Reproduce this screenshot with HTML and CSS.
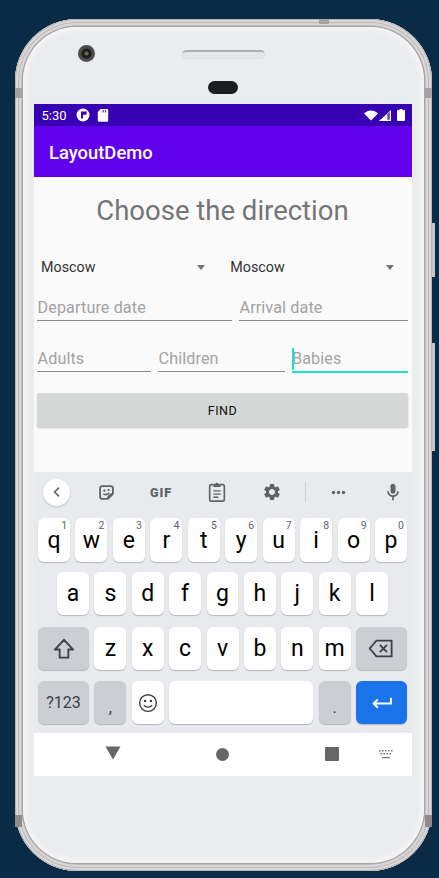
FILE: index.html
```html
<!DOCTYPE html>
<html lang="en">
<head>
    <meta charset="UTF-8">
    <meta name="viewport" content="width=device-width, initial-scale=1.0">
    <title>LayoutDemo</title>
    <link rel="stylesheet" href="styles.css">
</head>
<body>
    <div class="side-btn side-btn-power"></div>
    <div class="side-btn side-btn-volume"></div>
    <div class="phone">
        <span class="band band-top"></span>
        <span class="band band-tl"></span>
        <span class="band band-tr"></span>
        <span class="band band-bl"></span>
        <span class="band band-br"></span>
        <div class="bezel">
            <span class="camera"></span>
            <span class="speaker"></span>
            <span class="sensor"></span>
            <div class="screen">
                <div class="status-bar">
                    <span class="time">5:30</span>
                    <svg class="st-icon st-first" viewBox="0 0 14 14"><circle cx="7" cy="7" r="6.5" fill="#fff"/><path d="M7 3.4h3.6v3.4H7v3.8H5V3.4z" fill="#3700b3"/></svg>
                    <svg class="st-icon" viewBox="0 0 12 14"><path d="M3.5 1H10a1.2 1.2 0 0 1 1.2 1.2v10.4a1.2 1.2 0 0 1-1.2 1.2H2a1.2 1.2 0 0 1-1.2-1.2V4z" fill="#fff"/><path d="M5.6 2h1v2.6h-1zM7.9 2h1v2.6h-1z" fill="#3700b3"/></svg>
                    <span class="status-spacer"></span>
                    <svg class="st-wifi" viewBox="0 0 14 11"><path d="M0 3.4C2 1.4 4.4.4 7 .4s5 1 7 3L7 10.6z" fill="#fff"/></svg>
                    <svg class="st-signal" viewBox="0 0 12 11"><path d="M12 0v11H0z" fill="#fff"/><path d="M8.300 4v5.800h2.500V1.800z" fill="#3700b3" opacity=".75"/></svg>
                    <svg class="st-batt" viewBox="0 0 8 12"><path d="M2.500 0h3v1H7a1 1 0 0 1 1 1v9a1 1 0 0 1-1 1H1a1 1 0 0 1-1-1V2a1 1 0 0 1 1-1h1.500z" fill="#fff"/></svg>
                </div>
                <div class="app-bar">LayoutDemo</div>
                <div class="content">
                    <h1 class="title">Choose the direction</h1>
                    <div class="spinners">
                        <div class="spinner"><span>Moscow</span><i class="arrow"></i></div>
                        <div class="spinner"><span>Moscow</span><i class="arrow"></i></div>
                    </div>
                    <div class="fields fields-dates">
                        <input class="field" placeholder="Departure date">
                        <input class="field" placeholder="Arrival date">
                    </div>
                    <div class="fields fields-people">
                        <input class="field" placeholder="Adults">
                        <input class="field" placeholder="Children">
                        <div class="focus-wrap">
                            <input class="field field-focus" placeholder="Babies">
                            <span class="caret"></span>
                        </div>
                    </div>
                    <button class="find-btn">FIND</button>
                </div>
                <div class="keyboard">
                    <div class="kb-tools">
                        <span class="tool-back"><svg viewBox="0 0 24 24" width="16" height="16"><path d="M15 5.500 8.500 12l6.500 6.500" fill="none" stroke="#5f6368" stroke-width="2.400"/></svg></span>
                        <svg class="tool tool-sticker" viewBox="0 0 24 24"><path d="M6 3h12a3 3 0 0 1 3 3v8l-7 7H6a3 3 0 0 1-3-3V6a3 3 0 0 1 3-3z" fill="none" stroke="#5f6368" stroke-width="2.600"/><path d="M14 21c0-4 3-7 7-7" fill="none" stroke="#5f6368" stroke-width="2.400"/><circle cx="9" cy="9.500" r="1.600" fill="#5f6368"/><circle cx="15" cy="8.500" r="1.600" fill="#5f6368"/><path d="M7.500 14c2.500 1.600 5 1.300 8-1.200" fill="none" stroke="#5f6368" stroke-width="2.200"/></svg>
                        <span class="tool-gif">GIF</span>
                        <svg class="tool tool-clip" viewBox="0 0 24 24"><path d="M8 4H5.500A1.500 1.500 0 0 0 4 5.500v15A1.500 1.500 0 0 0 5.500 22h13a1.500 1.500 0 0 0 1.500-1.500v-15A1.500 1.500 0 0 0 18.500 4H16" fill="none" stroke="#5f6368" stroke-width="1.800"/><path d="M8 3h2.500a1.600 1.600 0 0 1 3 0H16v3.500H8zM8 10h8v1.500H8zM8 13.500h8V15H8zM8 17h5.500v1.500H8z" fill="#5f6368"/></svg>
                        <svg class="tool tool-gear" viewBox="0 0 24 24"><path fill="#5f6368" d="M19.14 12.94c.04-.3.06-.61.06-.94 0-.32-.02-.64-.07-.94l2.03-1.58c.18-.14.23-.41.12-.61l-1.92-3.32c-.12-.22-.37-.29-.59-.22l-2.39.96c-.5-.38-1.03-.7-1.62-.94l-.36-2.54c-.04-.24-.24-.41-.48-.41h-3.84c-.24 0-.43.17-.47.41l-.36 2.54c-.59.24-1.13.57-1.62.94l-2.39-.96c-.22-.08-.47 0-.59.22L2.74 8.87c-.12.21-.08.47.12.61l2.03 1.58c-.05.3-.09.63-.09.94s.02.64.07.94l-2.03 1.58c-.18.14-.23.41-.12.61l1.92 3.32c.12.22.37.29.59.22l2.39-.96c.5.38 1.03.7 1.62.94l.36 2.54c.05.24.24.41.48.41h3.84c.24 0 .44-.17.47-.41l.36-2.54c.59-.24 1.13-.56 1.62-.94l2.39.96c.22.08.47 0 .59-.22l1.92-3.32c.12-.22.07-.47-.12-.61l-2.01-1.58zM12 15.600c-1.980 0-3.600-1.620-3.600-3.600s1.620-3.600 3.600-3.600 3.600 1.620 3.600 3.600-1.620 3.600-3.600 3.600z"/></svg>
                        <span class="tool-divider"></span>
                        <svg class="tool tool-dots" viewBox="0 0 18 6"><circle cx="3" cy="3" r="2" fill="#5f6368"/><circle cx="9" cy="3" r="2" fill="#5f6368"/><circle cx="15" cy="3" r="2" fill="#5f6368"/></svg>
                        <svg class="tool tool-mic" viewBox="0 0 24 24"><path fill="#5f6368" d="M12 14c1.660 0 3-1.340 3-3V5c0-1.660-1.340-3-3-3S9 3.340 9 5v6c0 1.660 1.340 3 3 3zm5-3c0 2.760-2.240 5-5 5s-5-2.240-5-5H5c0 3.530 2.610 6.430 6 6.920V22h2v-4.080c3.390-.49 6-3.390 6-6.920h-2z"/></svg>
                    </div>
                    <div class="kb-row kb-row-top">
                        <span class="key">q<sup>1</sup></span>
                        <span class="key">w<sup>2</sup></span>
                        <span class="key">e<sup>3</sup></span>
                        <span class="key">r<sup>4</sup></span>
                        <span class="key">t<sup>5</sup></span>
                        <span class="key">y<sup>6</sup></span>
                        <span class="key">u<sup>7</sup></span>
                        <span class="key">i<sup>8</sup></span>
                        <span class="key">o<sup>9</sup></span>
                        <span class="key">p<sup>0</sup></span>
                    </div>
                    <div class="kb-row kb-row-home">
                        <span class="key">a</span>
                        <span class="key">s</span>
                        <span class="key">d</span>
                        <span class="key">f</span>
                        <span class="key">g</span>
                        <span class="key">h</span>
                        <span class="key">j</span>
                        <span class="key">k</span>
                        <span class="key">l</span>
                    </div>
                    <div class="kb-row">
                        <span class="key key-mod key-wide"><svg viewBox="0 0 24 24" width="26" height="26"><path d="M12 3.500 3.500 12.500H8V20h8v-7.500h4.500z" fill="none" stroke="#3c4043" stroke-width="1.700" stroke-linejoin="round"/></svg></span>
                        <span class="key">z</span>
                        <span class="key">x</span>
                        <span class="key">c</span>
                        <span class="key">v</span>
                        <span class="key">b</span>
                        <span class="key">n</span>
                        <span class="key">m</span>
                        <span class="key key-mod key-wide"><svg viewBox="0 0 24 24" width="27" height="27"><path d="M7.500 5H21v14H7.500L1.500 12z" fill="none" stroke="#3c4043" stroke-width="1.600" stroke-linejoin="round"/><path d="m10.500 8.800 6.400 6.400m0-6.400-6.400 6.400" stroke="#3c4043" stroke-width="1.600"/></svg></span>
                    </div>
                    <div class="kb-row kb-row-bottom">
                        <span class="key key-mod key-wide key-sym">?123</span>
                        <span class="key key-mod key-punct">,</span>
                        <span class="key"><svg viewBox="0 0 24 24" width="20" height="20"><circle cx="12" cy="12" r="10" fill="none" stroke="#3c4043" stroke-width="1.700"/><circle cx="8.500" cy="9.500" r="1.500" fill="#3c4043"/><circle cx="15.500" cy="9.500" r="1.500" fill="#3c4043"/><path d="M7 14.500c2.500 3.200 7.500 3.200 10 0" fill="none" stroke="#3c4043" stroke-width="1.700"/></svg></span>
                        <span class="key key-space"></span>
                        <span class="key key-mod key-punct">.</span>
                        <span class="key key-enter key-wide"><svg viewBox="0 0 24 24" width="25" height="25"><path d="M21 7.500V13H4.500m4-4-4 4 4 4" fill="none" stroke="#fff" stroke-width="1.900"/></svg></span>
                    </div>
                </div>
                <div class="nav-bar">
                    <svg class="nav-back" viewBox="0 0 16 14"><path d="M.5.500h15L8 13.500z" fill="#666"/></svg>
                    <span class="nav-home"></span>
                    <span class="nav-recent"></span>
                    <svg class="nav-kb" viewBox="0 0 16 10"><path d="M1 1h1.500v1.500H1zM4 1h1.500v1.500H4zM7 1h1.500v1.500H7zM10 1h1.500v1.500H10zM13 1h1.500v1.500H13zM2.500 4H4v1.500H2.500zM5.500 4H7v1.500H5.500zM8.500 4H10v1.500H8.500zM11.500 4H13v1.500h-1.500zM4 8h8v1.200H4z" fill="#777"/></svg>
                </div>
            </div>
        </div>
    </div>
</body>
</html>
```

FILE: styles.css
```css
* {
    box-sizing: border-box;
}
body {
    margin: 0;
    height: 878px;
    overflow: hidden;
    padding: 19px 0 0 15px;
    background-color: #0a2b46;
    font-family: Roboto, sans-serif;
    position: relative;
}
.phone {
    position: relative;
    width: 417px;
    height: 852px;
    padding: 8px;
    border-radius: 62px;
    background-color: #a9a5a7;
    box-shadow: inset 0 0 0 1px #b7b2b4, inset 0 0 0 3px #dcd9da, inset 0 0 0 4px #bdb9ba, inset 0 0 0 6.5px #d8d5d6;
}
.bezel {
    position: relative;
    height: 100%;
    padding: 77px 12px 0 11px;
    border-radius: 54px;
    background-color: #ebecee;
    box-shadow: inset 0 0 5px 3px #f6f6f7;
}
.band {
    position: absolute;
    background-color: #a6a2a4;
}
.band-top {
    left: 304px;
    top: 0;
    width: 10px;
    height: 5px;
}
.band-tl, .band-tr {
    top: 69px;
    width: 7px;
    height: 10px;
}
.band-bl, .band-br {
    top: 796px;
    width: 7px;
    height: 12px;
    background-color: #8f8b8d;
}
.band-tl, .band-bl {
    left: 0;
}
.band-tr, .band-br {
    right: 0;
}
.side-btn {
    position: absolute;
    left: 432px;
    width: 3px;
    background-color: #c9c5c6;
}
.side-btn-power {
    top: 223px;
    height: 54px;
}
.side-btn-volume {
    top: 343px;
    height: 108px;
}
.camera {
    position: absolute;
    left: 55px;
    top: 18px;
    width: 17px;
    height: 17px;
    border-radius: 50%;
    background: radial-gradient(circle, #6a6a3c 0 1.5px, #1e1e20 2.5px 4.5px, #4d4d50 5.5px);
}
.speaker {
    position: absolute;
    left: 159px;
    top: 23px;
    width: 83px;
    height: 9px;
    border-radius: 5px;
    border: 1px solid #dcdee2;
    border-top: 2px solid #a9afb6;
    background-color: #e4e6ea;
}
.sensor {
    position: absolute;
    left: 185px;
    top: 54px;
    width: 30px;
    height: 13px;
    border-radius: 7px;
    background-color: #1c1d21;
}
.screen {
    height: 672px;
    display: flex;
    flex-direction: column;
    background-color: #fff;
}

/* status bar */
.status-bar {
    height: 22px;
    padding: 0 7px 0 7.5px;
    display: flex;
    align-items: center;
    background-color: #3700b3;
    color: #fff;
}
.time {
    font-size: 13px;
}
.st-icon {
    width: 14px;
    height: 14px;
    margin-left: 6px;
}
.st-first {
    margin-left: 9px;
}
.status-spacer {
    flex: 1;
}
.st-wifi {
    width: 14px;
    height: 11px;
}
.st-signal {
    width: 12px;
    height: 11px;
    margin-left: 1px;
}
.st-batt {
    width: 8px;
    height: 12px;
    margin-left: 6px;
}

.app-bar {
    height: 51px;
    padding: 1px 0 0 15px;
    display: flex;
    align-items: center;
    background-color: #6200ee;
    color: #fff;
    font-size: 18.4px;
    font-weight: 500;
}

/* form */
.content {
    height: 295px;
    padding: 0 4px 0 3px;
    background-color: #fafafa;
}
.title {
    margin: 17px 0 0;
    height: 34px;
    line-height: 34px;
    text-align: center;
    font-size: 27.5px;
    font-weight: 400;
    color: #757575;
}
.spinners {
    margin-top: 22px;
    display: flex;
    gap: 8px;
}
.spinner {
    flex: 1;
    height: 34px;
    padding: 0 14px 0 4px;
    display: flex;
    align-items: center;
    justify-content: space-between;
    font-size: 14.3px;
    color: #333;
}
.spinner + .spinner {
    padding-left: 3.5px;
}
.arrow {
    width: 0;
    height: 0;
    border-left: 4.5px solid transparent;
    border-right: 4.5px solid transparent;
    border-top: 5px solid #757575;
}
.fields {
    display: grid;
    gap: 7px;
}
.fields-dates {
    margin-top: 11px;
    grid-template-columns: 195px 1fr;
}
.fields-people {
    margin-top: 25px;
    grid-template-columns: 114px 127px 1fr;
}
.field {
    display: block;
    width: 100%;
    height: 26px;
    padding: 0 1px 0 0.5px;
    border: none;
    border-bottom: 1px solid #8a8a8a;
    outline: none;
    background: none;
    font-family: Roboto, sans-serif;
    font-size: 16.2px;
    letter-spacing: 0.1px;
}
.field::placeholder {
    color: #a3a3a3;
    opacity: 1;
}
.focus-wrap {
    position: relative;
}
.field-focus {
    padding-left: 0;
    border-bottom: 2px solid #1de3c2;
    height: 27px;
}
.caret {
    position: absolute;
    left: 0;
    top: 2px;
    width: 2px;
    height: 22px;
    background-color: #1de3c2;
}
.find-btn {
    display: block;
    width: 100%;
    height: 34px;
    margin-top: 20px;
    border: none;
    border-radius: 2px;
    background-color: #d6d7d7;
    box-shadow: 0 1px 2px rgba(0, 0, 0, 0.2);
    color: #111;
    font-family: Roboto, sans-serif;
    font-size: 12.5px;
    font-weight: 400;
    letter-spacing: 0.5px;
}

/* keyboard */
.keyboard {
    height: 261px;
    padding: 0 5px 0 4px;
    background-color: #e8eaed;
}
.kb-tools {
    height: 40px;
    margin-bottom: 6px;
    display: flex;
    align-items: center;
}
.tool-back {
    width: 27px;
    height: 27px;
    margin-left: 5px;
    border-radius: 50%;
    background-color: #fff;
    box-shadow: 0 1px 2px rgba(0, 0, 0, 0.2);
    display: flex;
    align-items: center;
    justify-content: center;
}
.tool {
    flex: none;
}
.tool-sticker {
    margin-left: 28px;
    width: 17px;
    height: 17px;
}
.tool-gif {
    flex: 0 0 22px;
    margin-left: 35px;
    font-size: 12.5px;
    font-weight: 900;
    letter-spacing: 1px;
    white-space: nowrap;
    color: #5f6368;
}
.tool-clip {
    margin-left: 34px;
    width: 22px;
    height: 22px;
}
.tool-gear {
    margin-left: 34px;
    width: 20px;
    height: 20px;
}
.tool-divider {
    width: 1px;
    height: 20px;
    margin-left: 23px;
    background-color: #d0d2d6;
}
.tool-dots {
    margin-left: 24.5px;
    width: 15px;
    height: 5px;
}
.tool-mic {
    margin-left: 37.5px;
    width: 20px;
    height: 20px;
}
.kb-row {
    height: 43px;
    margin-bottom: 11px;
    display: flex;
    gap: 5.4px;
}
.kb-row-top {
    height: 44px;
    margin-bottom: 10px;
}
.kb-row-home {
    padding: 0 19px;
    margin-bottom: 12px;
}
.key {
    flex: 1 1 0;
    position: relative;
    display: flex;
    align-items: center;
    justify-content: center;
    border-radius: 6px;
    background-color: #fff;
    box-shadow: 0 1px 1px rgba(60, 64, 67, 0.3);
    color: #000;
    font-size: 23px;
}
.key sup {
    position: absolute;
    top: 2px;
    right: 3px;
    font-size: 10.5px;
    line-height: 12px;
    color: #5f6368;
}
.key-mod {
    background-color: #ccced3;
}
.key-wide {
    flex: 0 0 51px;
}
.key-space {
    flex: 0 0 144px;
}
.kb-row-bottom .key:not(.key-wide):not(.key-space) {
    flex: 0 0 32px;
}
.key-sym {
    font-size: 16px;
    color: #3c4043;
}
.key-punct {
    font-size: 16px;
    color: #3c4043;
    padding-top: 10px;
}
.key-enter {
    background-color: #1a73e8;
}

/* nav bar */
.nav-bar {
    height: 43px;
    background-color: #fff;
    display: flex;
    align-items: center;
}
.nav-back {
    width: 16px;
    height: 14px;
    margin: 0 0 3px 71px;
}
.nav-home {
    width: 13px;
    height: 13px;
    margin: 0 0 1px 95px;
    border-radius: 50%;
    background-color: #666;
}
.nav-recent {
    width: 14px;
    height: 14px;
    margin: 0 0 1px 96px;
    border-radius: 1px;
    background-color: #666;
}
.nav-kb {
    width: 16px;
    height: 10px;
    margin: 0 0 1px 39px;
}
```
